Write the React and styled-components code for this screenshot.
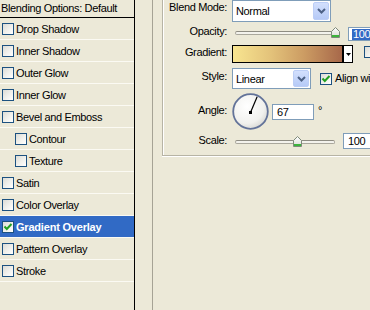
import React from "react";
import styled, { createGlobalStyle } from "styled-components";

const GlobalStyle = createGlobalStyle`
  html, body { margin: 0; padding: 0; background: #ECE9D8; overflow: hidden; }
  body {
    font-family: "Liberation Sans", Tahoma, Arial, sans-serif;
    font-size: 11px;
    color: #000;
  }
`;

const Page = styled.div`
  display: flex;
  width: 370px;
  height: 310px;
  overflow: hidden;
  background: #ECE9D8;
`;

/* ---------- left style list ---------- */
const StyleList = styled.ul`
  list-style: none;
  margin: 0;
  padding: 0;
  width: 134px;
  flex-shrink: 0;
  border-right: 1px solid #000;
`;

const ListHeader = styled.li`
  height: 17px;
  line-height: 17px;
  border-bottom: 1px solid #000;
  padding-left: 1px;
  letter-spacing: -0.35px;
  white-space: nowrap;
`;

const ListItem = styled.li`
  display: flex;
  align-items: center;
  gap: 2px;
  height: 21px;
  border-bottom: 1px solid #FBFAF3;
  padding-left: ${(p) => (p.$indent ? 15 : 2)}px;
  background: ${(p) => (p.$selected ? "#316AC5" : "transparent")};
  color: ${(p) => (p.$selected ? "#fff" : "#000")};
  font-weight: ${(p) => (p.$selected ? 700 : 400)};
  letter-spacing: ${(p) => (p.$selected ? "-0.2px" : "-0.35px")};
  white-space: nowrap;
`;

const Box = styled.span`
  box-sizing: border-box;
  width: 12px;
  height: 12px;
  flex-shrink: 0;
  border: 1px solid #1C5180;
  background: linear-gradient(135deg, #DCDCD6 0%, #F1F1ED 55%, #FFFFFF 100%);
  display: inline-flex;
  align-items: center;
  justify-content: center;
  margin-top: ${(p) => p.$mt || 0}px;
  margin-left: ${(p) => p.$ml || 0}px;
`;

const CheckBox = ({ checked, mt, ml }) => (
  <Box $mt={mt} $ml={ml}>
    {checked && (
      <svg width="10" height="10" viewBox="0 0 10 10">
        <polyline
          points="1.5,4.5 3.8,7 8.5,2"
          fill="none"
          stroke="#21A121"
          strokeWidth="2"
        />
      </svg>
    )}
  </Box>
);

/* ---------- separators ---------- */
const Gutter = styled.div`
  width: 17px;
  flex-shrink: 0;
`;

const Divider = styled.div`
  width: 1px;
  flex-shrink: 0;
  background: #A6A395;
`;

/* ---------- right side ---------- */
const Content = styled.div`
  flex: 1;
  min-width: 0;
  padding-left: 9px;
`;

const GroupBox = styled.div`
  width: 240px;
  padding-bottom: 3px;
  border-left: 1px solid #B7B4A5;
  border-bottom: 1px solid #B7B4A5;
  box-shadow: inset 1px 0 #fff, 0 1px #fff;
`;

const FieldRow = styled.div`
  display: flex;
  align-items: flex-start;
  height: ${(p) => p.$h}px;
  white-space: nowrap;
`;

const FieldLabel = styled.div`
  width: 63px;
  margin-left: 1px;
  margin-right: 5px;
  flex-shrink: 0;
  text-align: right;
  line-height: 13px;
  padding-top: ${(p) => p.$top}px;
  letter-spacing: -0.35px;
`;

const Select = styled.div`
  box-sizing: border-box;
  display: flex;
  align-items: center;
  width: ${(p) => p.$w}px;
  height: ${(p) => p.$h}px;
  margin-top: ${(p) => p.$mt || 0}px;
  padding-left: 3px;
  flex-shrink: 0;
  border: 1px solid #7F9DB9;
  background: #fff;
  letter-spacing: -0.35px;
`;

const SelectButton = styled.span`
  box-sizing: border-box;
  margin-left: auto;
  margin-right: 1px;
  width: 16px;
  height: calc(100% - 2px);
  border: 1px solid #BCCEF6;
  border-radius: 2px;
  background: linear-gradient(#D3E0FD, #B6CAF7);
  display: flex;
  align-items: center;
  justify-content: center;
`;

const Chevron = () => (
  <svg width="9" height="6" viewBox="0 0 9 6">
    <polyline points="1,1 4.5,4.5 8,1" fill="none" stroke="#4D6185" strokeWidth="2" />
  </svg>
);

const Slider = styled.div`
  position: relative;
  flex-shrink: 0;
  width: ${(p) => p.$w}px;
  height: 11px;
  margin-top: ${(p) => p.$mt}px;
`;

const Track = styled.div`
  position: absolute;
  left: 3px;
  width: 100px;
  top: 4px;
  height: 4px;
  box-sizing: border-box;
  border: 1px solid #A9A79C;
  border-top-color: #8E8C82;
  border-radius: 2px;
  background: #F3F2EC;
`;

const Thumb = styled.svg`
  position: absolute;
  top: 0;
`;

const NumInput = styled.div`
  box-sizing: border-box;
  display: flex;
  align-items: center;
  flex-shrink: 0;
  width: ${(p) => p.$w}px;
  height: ${(p) => p.$h}px;
  margin-top: ${(p) => p.$mt}px;
  margin-left: ${(p) => p.$ml}px;
  padding-left: 4px;
  border: 1px solid #7F9DB9;
  background: #fff;
  letter-spacing: -0.35px;
`;

const Highlight = styled.span`
  background: #316AC5;
  color: #fff;
  padding: 0 1px;
  margin-left: -1px;
  line-height: 11px;
`;

const Swatch = styled.div`
  box-sizing: border-box;
  flex-shrink: 0;
  width: 111px;
  height: 18px;
  margin-top: 1px;
  border: 1px solid #000;
  background: linear-gradient(to right, #F8E590 0%, #E3C27A 35%, #CC9C63 65%, #A7684A 100%);
`;

const SwatchArrow = styled.div`
  box-sizing: border-box;
  flex-shrink: 0;
  width: 10px;
  height: 18px;
  margin-top: 1px;
  border: 1px solid #000;
  background: #fff;
  display: flex;
  align-items: center;
  justify-content: center;
`;

const InlineCheck = styled.div`
  display: flex;
  align-items: center;
  gap: 3px;
  margin-top: ${(p) => p.$mt}px;
  margin-left: ${(p) => p.$ml}px;
  line-height: 13px;
  letter-spacing: -0.35px;
`;

const Degree = styled.span`
  margin-top: 14px;
  margin-left: 4px;
  line-height: 13px;
`;

const DialWrap = styled.svg`
  flex-shrink: 0;
  margin-top: 3px;
`;

const SliderControl = ({ w, mt, pct }) => (
  <Slider $w={w} $mt={mt}>
    <Track />
    <Thumb
      width="9"
      height="11"
      viewBox="0 0 9 11"
      style={{ left: `${3 + pct * 100 - 4.5}px` }}
    >
      <defs>
        <linearGradient id="tg" x1="0" y1="0" x2="0" y2="1">
          <stop offset="0" stopColor="#FFFFFF" />
          <stop offset="1" stopColor="#D9DAD3" />
        </linearGradient>
      </defs>
      <polygon points="0.5,4.5 4.5,0.5 8.5,4.5 8.5,10.5 0.5,10.5" fill="url(#tg)" stroke="#7E8A7A" />
      <rect x="1" y="8" width="7" height="2" fill="#3DB43D" />
    </Thumb>
  </Slider>
);

const Dial = ({ angle }) => {
  const cx = 18.5;
  const cy = 19.5;
  const r = 17;
  const a = (angle * Math.PI) / 180;
  const x2 = cx + r * Math.cos(a);
  const y2 = cy - r * Math.sin(a);
  return (
    <DialWrap width="37" height="37" viewBox="0 0 37 37">
      <defs>
        <radialGradient id="dg" cx="0.4" cy="0.35" r="0.7">
          <stop offset="0" stopColor="#FFFFFF" />
          <stop offset="0.7" stopColor="#F1F1EE" />
          <stop offset="1" stopColor="#D6D6D2" />
        </radialGradient>
      </defs>
      <circle cx="18.5" cy="18.5" r="17.3" fill="url(#dg)" stroke="#637399" strokeWidth="1.8" />
      <line x1={cx} y1={cy} x2={x2} y2={y2} stroke="#000" strokeWidth="1.2" />
      <rect x={cx - 1.5} y={cy - 1.5} width="3" height="3" fill="#000" />
    </DialWrap>
  );
};

const styles = [
  { name: "Drop Shadow" },
  { name: "Inner Shadow" },
  { name: "Outer Glow" },
  { name: "Inner Glow" },
  { name: "Bevel and Emboss" },
  { name: "Contour", indent: true },
  { name: "Texture", indent: true },
  { name: "Satin" },
  { name: "Color Overlay" },
  { name: "Gradient Overlay", selected: true, checked: true },
  { name: "Pattern Overlay" },
  { name: "Stroke" },
];

export default function App() {
  return (
    <>
      <GlobalStyle />
      <Page>
        <StyleList>
          <ListHeader>Blending Options: Default</ListHeader>
          {styles.map((s) => (
            <ListItem key={s.name} $indent={s.indent} $selected={s.selected}>
              <CheckBox checked={s.checked} />
              <span>{s.name}</span>
            </ListItem>
          ))}
        </StyleList>
        <Gutter />
        <Divider />
        <Content>
          <GroupBox>
            <FieldRow $h={24}>
              <FieldLabel $top={1}>Blend Mode:</FieldLabel>
              <Select $w={99} $h={22}>
                Normal
                <SelectButton>
                  <Chevron />
                </SelectButton>
              </Select>
            </FieldRow>
            <FieldRow $h={20}>
              <FieldLabel $top={1}>Opacity:</FieldLabel>
              <SliderControl w={112} mt={3} pct={1} />
              <NumInput $w={30} $h={14} $mt={3} $ml={4}>
                <Highlight>100</Highlight>
              </NumInput>
            </FieldRow>
            <FieldRow $h={22}>
              <FieldLabel $top={2}>Gradient:</FieldLabel>
              <Swatch />
              <SwatchArrow>
                <svg width="5" height="3" viewBox="0 0 5 3">
                  <polygon points="0,0 5,0 2.5,3" fill="#000" />
                </svg>
              </SwatchArrow>
              <InlineCheck $mt={2} $ml={11}>
                <CheckBox />
              </InlineCheck>
            </FieldRow>
            <FieldRow $h={24}>
              <FieldLabel $top={4}>Style:</FieldLabel>
              <Select $w={79} $h={21} $mt={2}>
                Linear
                <SelectButton>
                  <Chevron />
                </SelectButton>
              </Select>
              <InlineCheck $mt={6} $ml={9}>
                <CheckBox checked />
                <span>Align wi</span>
              </InlineCheck>
            </FieldRow>
            <FieldRow $h={42}>
              <FieldLabel $top={14}>Angle:</FieldLabel>
              <Dial angle={67} />
              <NumInput $w={42} $h={16} $mt={14} $ml={3}>
                67
              </NumInput>
              <Degree>°</Degree>
            </FieldRow>
            <FieldRow $h={20}>
              <FieldLabel $top={2}>Scale:</FieldLabel>
              <SliderControl w={107} mt={4} pct={0.625} />
              <NumInput $w={40} $h={16} $mt={1} $ml={4}>
                100
              </NumInput>
            </FieldRow>
          </GroupBox>
        </Content>
      </Page>
    </>
  );
}
